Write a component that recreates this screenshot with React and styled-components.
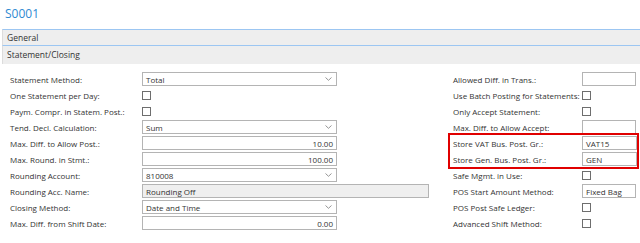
import React from 'react';
import styled, { createGlobalStyle } from 'styled-components';

const GlobalStyle = createGlobalStyle`
  html, body {
    margin: 0;
    padding: 0;
    background: #ffffff;
  }
  body {
    font-family: 'Open Sans', 'Noto Sans', sans-serif;
    color: #333333;
  }
`;

const leftRows = [
  { label: 'Statement Method:', kind: 'select', value: 'Total' },
  { label: 'One Statement per Day:', kind: 'check' },
  { label: 'Paym. Compr. in Statem. Post.:', kind: 'check' },
  { label: 'Tend. Decl. Calculation:', kind: 'select', value: 'Sum' },
  { label: 'Max. Diff. to Allow Post.:', kind: 'number', value: '10.00' },
  { label: 'Max. Round. in Stmt.:', kind: 'number', value: '100.00' },
  { label: 'Rounding Account:', kind: 'select', value: '810008' },
  { label: 'Rounding Acc. Name:', kind: 'readonly', value: 'Rounding Off' },
  { label: 'Closing Method:', kind: 'select', value: 'Date and Time' },
  { label: 'Max. Diff. from Shift Date:', kind: 'number', value: '0.00' },
];

const rightTop = [
  { label: 'Allowed Diff. in Trans.:', kind: 'text', value: '' },
  { label: 'Use Batch Posting for Statements:', kind: 'check' },
  { label: 'Only Accept Statement:', kind: 'check' },
  { label: 'Max. Diff. to Allow Accept:', kind: 'text', value: '' },
];

const rightMarked = [
  { label: 'Store VAT Bus. Post. Gr.:', kind: 'text', value: 'VAT15' },
  { label: 'Store Gen. Bus. Post. Gr.:', kind: 'text', value: 'GEN' },
];

const rightBottom = [
  { label: 'Safe Mgmt. in Use:', kind: 'check' },
  { label: 'POS Start Amount Method:', kind: 'text', value: 'Fixed Bag' },
  { label: 'POS Post Safe Ledger:', kind: 'check' },
  { label: 'Advanced Shift Method:', kind: 'check' },
];

const Chevron = () => (
  <svg width="7" height="4" viewBox="0 0 7 4">
    <polyline points="0.5,0.5 3.5,3.3 6.5,0.5" fill="none" stroke="#8a8a8a" strokeWidth="0.9" />
  </svg>
);

const Field = ({ row }) => {
  if (row.kind === 'check') return <CheckBox />;
  return (
    <Input $kind={row.kind}>
      <span>{row.value}</span>
      {row.kind === 'select' && <Chevron />}
    </Input>
  );
};

const Rows = ({ rows, $labelWidth }) =>
  rows.map((row) => (
    <Row key={row.label} $labelWidth={$labelWidth}>
      <Label>{row.label}</Label>
      <Field row={row} />
    </Row>
  ));

const App = () => (
  <Page>
    <GlobalStyle />
    <Title>S0001</Title>
    <SectionBar $first>General</SectionBar>
    <SectionBar>Statement/Closing</SectionBar>
    <Body>
      <LeftColumn>
        <Rows rows={leftRows} $labelWidth={132} />
      </LeftColumn>
      <RightColumn>
        <Rows rows={rightTop} $labelWidth={129} />
        <Marked>
          <Rows rows={rightMarked} $labelWidth={129} />
        </Marked>
        <Rows rows={rightBottom} $labelWidth={129} />
      </RightColumn>
    </Body>
  </Page>
);

const Page = styled.div`
  width: 640px;
  height: 243px;
  overflow: hidden;
  background: #ffffff;
`;

const Title = styled.div`
  height: 29px;
  padding: 6px 0 0 5px;
  box-sizing: border-box;
  font-size: 12px;
  line-height: 16px;
  color: #2f8ad2;
`;

const SectionBar = styled.div`
  height: 17px;
  margin-left: 2px;
  padding-left: 4px;
  box-sizing: border-box;
  background: #eeeeee;
  font-size: 8.5px;
  line-height: 15px;
  color: #333333;
  border-top: ${(p) => (p.$first ? '1px solid #9cc6f2' : 'none')};
  border-bottom: 1px solid #9cc6f2;
  border-left: 1px solid #dcdcdc;
  ${(p) => !p.$first && `
    height: 18px;
    border-bottom: none;
    line-height: 17px;
  `}
`;

const Body = styled.div`
  display: flex;
  padding-top: 7px;
`;

const LeftColumn = styled.div`
  width: 327px;
  padding-left: 10px;
  display: flex;
  flex-direction: column;
`;

const RightColumn = styled.div`
  width: 183px;
  margin-left: 116px;
  display: flex;
  flex-direction: column;
`;

const Marked = styled.div`
  margin: -2px -3px -2px -5px;
  padding-left: 3px;
  border: 2px solid #e00000;
  display: flex;
  flex-direction: column;
`;

const Row = styled.div`
  display: grid;
  grid-template-columns: ${(p) => p.$labelWidth}px 1fr;
  align-items: center;
  height: 16px;
`;

const Label = styled.div`
  font-size: 8px;
  color: #333333;
  white-space: nowrap;
`;

const Input = styled.div`
  display: flex;
  align-items: center;
  justify-content: ${(p) => (p.$kind === 'number' ? 'flex-end' : 'space-between')};
  height: 14px;
  box-sizing: border-box;
  width: ${(p) => (p.$kind === 'readonly' ? '287px' : 'auto')};
  padding: 0 3px 0 3px;
  padding-right: ${(p) => (p.$kind === 'select' ? '4px' : '3px')};
  border: 1px solid #b4b4b4;
  background: ${(p) => (p.$kind === 'readonly' ? '#efefef' : '#ffffff')};
  font-size: 8px;
  color: #333333;
  white-space: nowrap;
  overflow: visible;
`;

const CheckBox = styled.div`
  width: 9px;
  height: 9px;
  box-sizing: border-box;
  border: 1px solid #6e6e6e;
  background: #ffffff;
`;

export default App;
